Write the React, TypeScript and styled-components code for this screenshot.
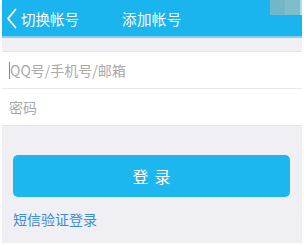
import React from "react";
import styled, { createGlobalStyle } from "styled-components";

const Global = createGlobalStyle`
  html, body { margin: 0; padding: 0; background: #ffffff; }
  body { font-family: "Noto Sans CJK SC", "Noto Sans", sans-serif; }
  #root { width: 304px; height: 245px; overflow: hidden; }
`;

const Screen = styled.div`
  position: relative;
  margin: 0 2px;
  width: 300px;
  height: 243px;
  background: #efeff4;
  display: flex;
  flex-direction: column;
`;

const Header = styled.header`
  height: 36px;
  background: #1ab4ef;
  border-bottom: 2px solid #7fd0f3;
  display: flex;
  align-items: center;
  color: #ffffff;
  font-size: 14.5px;
`;

const Back = styled.div`
  display: flex;
  align-items: center;
  gap: 4px;
  padding-left: 4px;
  width: 120px;
  box-sizing: border-box;
`;

const Title = styled.div`
  letter-spacing: 0.4px;
`;

const Overlay = styled.div`
  position: absolute;
  top: 0;
  right: 0;
  width: 32px;
  height: 15px;
  display: flex;
`;

const OverlayPart = styled.div<{ $c: string; $w: number }>`
  width: ${(p) => p.$w}px;
  background: ${(p) => p.$c};
`;

const Form = styled.div`
  margin-top: 13px;
  background: #ffffff;
  border-top: 1px solid #e4e4ea;
  border-bottom: 1px solid #e4e4ea;
`;

const Row = styled.div<{ $divider?: boolean }>`
  height: 36px;
  display: flex;
  align-items: center;
  padding-left: 7px;
  font-size: 14px;
  color: #a9a9a9;
  border-bottom: ${(p) => (p.$divider ? "1px solid #e8e8ec" : "none")};
`;

const Caret = styled.span`
  display: inline-block;
  width: 1px;
  height: 17px;
  background: #8a8a8a;
`;

const Body = styled.div`
  padding: 29px 12px 0 11px;
  display: flex;
  flex-direction: column;
`;

const LoginButton = styled.button`
  height: 42px;
  border: none;
  border-radius: 5px;
  background: #1cb7ef;
  color: #ffffff;
  font-family: inherit;
  font-size: 16px;
  letter-spacing: 6px;
  padding: 0 0 0 6px;
`;

const SmsLink = styled.a`
  margin-top: 12px;
  font-size: 14px;
  line-height: 20px;
  color: #3a8dd8;
  text-decoration: none;
`;

export default function App() {
  return (
    <>
      <Global />
      <Screen>
        <Header>
          <Back>
            <svg width="11" height="21" viewBox="0 0 11 21">
              <path d="M9.5 1.5 L2 10.5 L9.5 19.5" fill="none" stroke="#ffffff" strokeWidth="1.8" strokeLinecap="round" strokeLinejoin="round" />
            </svg>
            <span>切换帐号</span>
          </Back>
          <Title>添加帐号</Title>
        </Header>
        <Overlay>
          <OverlayPart $c="#72b6ca" $w={15} />
          <OverlayPart $c="#7fbdcb" $w={15} />
          <OverlayPart $c="#a8def2" $w={2} />
        </Overlay>
        <Form>
          <Row $divider>
            <Caret />
            QQ号/手机号/邮箱
          </Row>
          <Row>密码</Row>
        </Form>
        <Body>
          <LoginButton>登录</LoginButton>
          <SmsLink>短信验证登录</SmsLink>
        </Body>
      </Screen>
    </>
  );
}
